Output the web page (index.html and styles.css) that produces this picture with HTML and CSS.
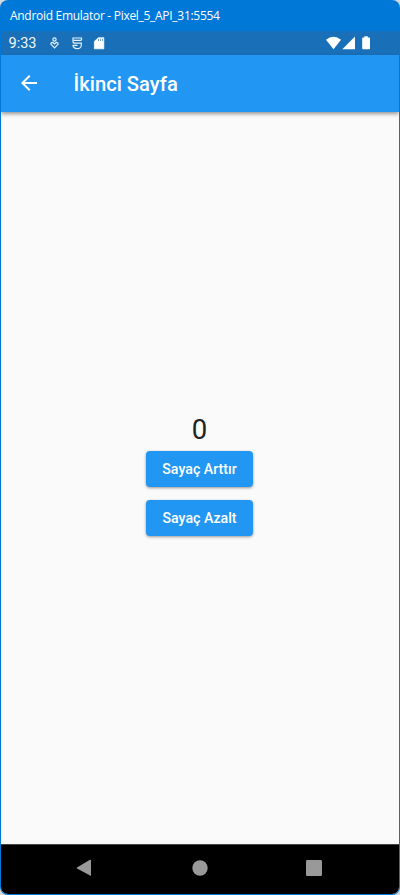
FILE: index.html
```html
<!DOCTYPE html>
<html lang="tr">
<head>
<meta charset="utf-8">
<title>Android Emulator</title>
<link rel="stylesheet" href="styles.css">
</head>
<body>
<div class="window">
  <div class="titlebar"><span class="wintitle">Android Emulator - Pixel_5_API_31:5554</span></div>
  <div class="screen">
    <div class="statusbar">
      <span class="clock">9:33</span>
      <svg class="notif" width="60" height="16" viewBox="0 0 60 16" fill="none" stroke="#fff" stroke-opacity=".9" stroke-width="1.2">
        <circle cx="6.500" cy="4.500" r="1.600"/>
        <path d="M6.500 12.800 3 9.300Q2.500 7.300 4.700 7.300L6.500 9 8.300 7.300Q10.500 7.300 10 9.300Z"/>
        <path d="M33.500 5V3H25V6.500Q25 8.200 27 8.200H33.300V10.500Q32.800 13.600 29.200 13.600Q25.500 13.600 25 10.300H29.500"/>
        <path d="M25.500 5.400H33.500"/>
        <path d="M50.400 2.700H55.800V13.800H46.400V6.300Z" fill="#fff" stroke="#fff" stroke-width=".8" stroke-linejoin="round"/>
        <path d="M50.500 3.800V6M52.500 3.800V6M54.500 3.800V6" stroke="#1a70b8" stroke-width=".7"/>
      </svg>
      <svg class="signals" width="48" height="14" viewBox="0 0 48 14" fill="#fff">
        <path d="M0 3.700Q7.500-2.300 15 3.700L7.500 13.200Z"/>
        <path d="M29 0.500V13.200H16.300Z"/>
        <path d="M38.400 0.200h3.400v1.200h1.400q.8 0 .8.800V12.400q0 .8-.8.800h-6.200q-.8 0-.8-.8V2.200q0-.8.800-.8h1.400z"/>
      </svg>
    </div>
    <header class="appbar">
      <svg class="back" width="24" height="24" viewBox="0 0 24 24" fill="#fff"><path d="M20 11H7.830l5.590-5.590L12 4l-8 8 8 8 1.410-1.410L7.830 13H20v-2z"/></svg>
      <h1>İkinci Sayfa</h1>
    </header>
    <main class="content">
      <div class="count">0</div>
      <button>Sayaç Arttır</button>
      <button>Sayaç Azalt</button>
    </main>
    <nav class="navbar">
      <svg width="16" height="18" viewBox="0 0 16 18" fill="#999"><path d="M15 1V17L1 9.500Q.3 9 1 8.500L13.500 1Q15 .3 15 1Z"/></svg>
      <svg width="16" height="18" viewBox="0 0 16 18" fill="#999"><circle cx="8" cy="9" r="7.700"/></svg>
      <svg width="16" height="18" viewBox="0 0 16 18" fill="#999"><rect y="1" width="16" height="16" rx="1.200"/></svg>
    </nav>
  </div>
</div>
</body>
</html>
```
FILE: styles.css
```css
* { box-sizing: border-box; }
body { margin: 0; background: #d5d8dc; font-family: Roboto, sans-serif; }
.window {
  height: 895px;
  padding: 0 1px 1px;
  display: flex;
  flex-direction: column;
  background: #0078d7;
  border-radius: 8px;
  overflow: hidden;
}
.titlebar {
  height: 31px;
  flex: none;
  padding-left: 9px;
  color: #fff;
  font: 12px/32px "Open Sans", sans-serif;
}
.wintitle { display: inline-block; letter-spacing: -0.29px; white-space: nowrap; }
.screen {
  flex: 1;
  display: flex;
  flex-direction: column;
  background: #fafafa;
  border-radius: 0 0 7px 7px;
  overflow: hidden;
}
.statusbar {
  height: 24px;
  flex: none;
  display: flex;
  align-items: center;
  padding: 0 25px 0 7.500px;
  background: #1a70b8;
  color: #fff;
}
.clock { width: 39px; font-size: 14.5px; line-height: 24px; padding-top: 1px; opacity: .95; }
.signals { margin-left: auto; }
.appbar {
  height: 56.500px;
  flex: none;
  display: flex;
  align-items: center;
  padding-left: 16px;
  background: #2196f3;
  box-shadow: 0 2px 4px rgba(0, 0, 0, .4);
  color: #fff;
}
.appbar h1 { margin: 1.500px 0 0 32.500px; font-size: 20.2px; line-height: 28px; font-weight: 500; }
.content {
  flex: 1;
  display: flex;
  flex-direction: column;
  align-items: center;
  padding: 301.500px 1px 0 0;
}
.count { height: 37.500px; font-size: 27.500px; line-height: 33px; font-weight: 400; color: #212121; }
button {
  width: 107.500px;
  height: 36.500px;
  margin: 0 0 12.500px;
  padding: 0;
  border: 0;
  border-radius: 4px;
  background: #2196f3;
  box-shadow: 0 1px 3px rgba(0, 0, 0, .4);
  color: #fff;
  font: 500 14.2px/36px Roboto, sans-serif;
}
.navbar {
  height: 50px;
  flex: none;
  display: flex;
  align-items: center;
  justify-content: space-between;
  padding: 0 77px 3px 75px;
  border-top: 1px solid #444;
  background: #000;
}
.navbar svg:nth-child(2) { margin-left: 1px; }
```
